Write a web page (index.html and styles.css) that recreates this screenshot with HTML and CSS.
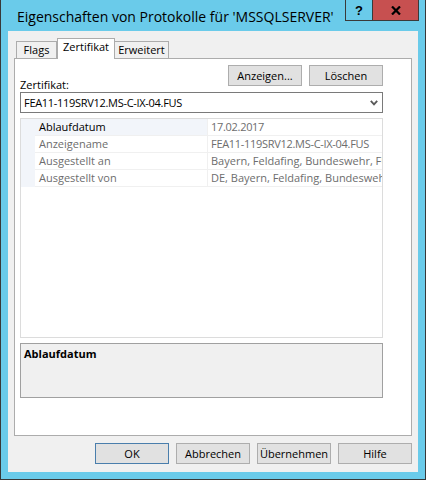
FILE: index.html
```html
<!DOCTYPE html>
<html lang="de">
<head>
<meta charset="utf-8">
<title>Eigenschaften</title>
<link rel="stylesheet" href="styles.css">
</head>
<body>
<div class="window">
  <div class="titlebar">
    <div class="title">Eigenschaften von Protokolle für 'MSSQLSERVER'</div>
    <div class="caption-buttons">
      <div class="cap help">?</div>
      <div class="cap close">
        <svg width="10" height="9" viewBox="0 0 10 9"><path d="M1 0.5 L9 8.5 M9 0.5 L1 8.5" stroke="#000" stroke-width="2.2" fill="none"/></svg>
      </div>
    </div>
  </div>
  <div class="client">
    <div class="tabs">
      <div class="tab tab-flags">Flags</div>
      <div class="tab tab-active">Zertifikat</div>
      <div class="tab tab-ext">Erweitert</div>
    </div>
    <div class="panel">
      <div class="cert-row">
        <div class="cert-label">Zertifikat:</div>
        <div class="cert-btns">
          <div class="btn">Anzeigen...</div>
          <div class="btn">Löschen</div>
        </div>
      </div>
      <div class="combo">
        <span class="combo-text tight">FEA11-119SRV12.MS-C-IX-04.FUS</span>
        <svg class="chev" width="8" height="6" viewBox="0 0 8 6"><path d="M0.8 0.8 L4 4.4 L7.2 0.8" stroke="#5a5a5a" stroke-width="1.8" fill="none"/></svg>
      </div>
      <div class="grid">
        <div class="row row-sel">
          <div class="margin"></div>
          <div class="name name-sel">Ablaufdatum</div>
          <div class="value tight">17.02.2017</div>
        </div>
        <div class="row">
          <div class="margin"></div>
          <div class="name">Anzeigename</div>
          <div class="value tight">FEA11-119SRV12.MS-C-IX-04.FUS</div>
        </div>
        <div class="row">
          <div class="margin"></div>
          <div class="name">Ausgestellt an</div>
          <div class="value">Bayern, Feldafing, Bundeswehr, FUS</div>
        </div>
        <div class="row">
          <div class="margin"></div>
          <div class="name">Ausgestellt von</div>
          <div class="value">DE, Bayern, Feldafing, Bundeswehr</div>
        </div>
      </div>
      <div class="desc">Ablaufdatum</div>
    </div>
    <div class="footer">
      <div class="btn btn-default">OK</div>
      <div class="btn">Abbrechen</div>
      <div class="btn">Übernehmen</div>
      <div class="btn">Hilfe</div>
    </div>
  </div>
</div>
</body>
</html>
```

FILE: styles.css
```css
* { box-sizing: border-box; }
html, body { margin: 0; padding: 0; }
body {
  width: 426px;
  height: 480px;
  font-family: "Open Sans", "Noto Sans", sans-serif;
  font-size: 11px;
  color: #000;
  overflow: hidden;
}
.window {
  width: 426px;
  height: 480px;
  background: #6acbea;
  border-left: 1px solid #383838;
  border-right: 1px solid #383838;
  border-bottom: 1px solid #383838;
  display: flex;
  flex-direction: column;
}
.titlebar {
  height: 31px;
  display: flex;
  align-items: flex-start;
  flex: none;
}
.title {
  font-size: 14px;
  line-height: 20px;
  padding-left: 16px;
  padding-top: 7px;
  white-space: nowrap;
  color: #000;
}
.caption-buttons {
  margin-left: auto;
  margin-right: 6px;
  display: flex;
}
.cap {
  height: 21px;
  display: flex;
  align-items: center;
  justify-content: center;
  border-bottom: 1px solid #3a3a3a;
}
.help {
  width: 28px;
  border-left: 1px solid #3a3a3a;
  border-right: 1px solid #3a3a3a;
  font-weight: bold;
  font-size: 13px;
  font-family: "Liberation Sans", sans-serif;
  background: #6acbea;
}
.close {
  width: 46px;
  background: #c75050;
  border-right: 1px solid #3a3a3a;
}
.client {
  flex: 1;
  margin: 0 7px 7px 7px;
  background: #f0f0f0;
  padding: 7px 6px 8px 6px;
  display: flex;
  flex-direction: column;
}
.tabs {
  height: 20px;
  display: flex;
  align-items: flex-end;
  padding-left: 2px;
  flex: none;
}
.tab {
  height: 17px;
  border: 1px solid #acacac;
  border-bottom: none;
  background: #f0f0f0;
  line-height: 15px;
  text-align: center;
  color: #000;
}
.tab-flags { width: 41px; }
.tab-active {
  width: 58px;
  height: 21px;
  margin-bottom: -1px;
  background: #fff;
  position: relative;
  z-index: 1;
  line-height: 16px;
}
.tab-ext { width: 54px; border-left: none; }
.panel {
  flex: 1;
  background: #fff;
  border: 1px solid #acacac;
  padding: 6px 28px 0 5px;
  display: flex;
  flex-direction: column;
}
.cert-row {
  height: 27px;
  display: flex;
  flex: none;
}
.cert-label {
  align-self: flex-end;
  line-height: 16px;
  margin-bottom: -1px;
}
.cert-btns {
  margin-left: auto;
  display: flex;
  gap: 7px;
  align-self: flex-start;
}
.btn {
  width: 74px;
  height: 21px;
  background: #e1e1e1;
  border: 1px solid #adadad;
  display: flex;
  align-items: center;
  justify-content: center;
  line-height: 16px;
  color: #000;
}
.btn-default { border-color: #4a7eac; }
.combo {
  height: 21px;
  border: 1px solid #7a7a7a;
  background: #fff;
  display: flex;
  align-items: center;
  padding-left: 3px;
  padding-right: 4px;
  flex: none;
}
.combo-text { line-height: 16px; }
.tight { letter-spacing: -0.3px; }
.chev { margin-left: auto; margin-top: 1px; }
.grid {
  margin-top: 5px;
  height: 220px;
  border: 1px solid #dcdcdc;
  background: #fff;
  flex: none;
  overflow: hidden;
}
.row {
  display: flex;
  height: 17px;
}
.margin {
  width: 14px;
  background: #f2f5fa;
  flex: none;
}
.name {
  width: 173px;
  flex: none;
  padding-left: 4px;
  color: #6d6d6d;
  line-height: 16px;
  border-bottom: 1px solid #f0f0f0;
  border-right: 1px solid #f0f0f0;
  white-space: nowrap;
}
.name-sel {
  background: #f2f5fa;
  color: #000;
}
.value {
  flex: 1;
  padding-left: 3px;
  color: #6d6d6d;
  line-height: 16px;
  border-bottom: 1px solid #f0f0f0;
  white-space: nowrap;
  overflow: hidden;
}
.desc {
  margin-top: 5px;
  height: 55px;
  border: 1px solid #a0a0a0;
  background: #f0f0f0;
  font-weight: bold;
  padding: 2px 3px;
  line-height: 16px;
  flex: none;
}
.footer {
  margin-top: 7px;
  display: flex;
  justify-content: flex-end;
  gap: 7px;
  flex: none;
}
```
